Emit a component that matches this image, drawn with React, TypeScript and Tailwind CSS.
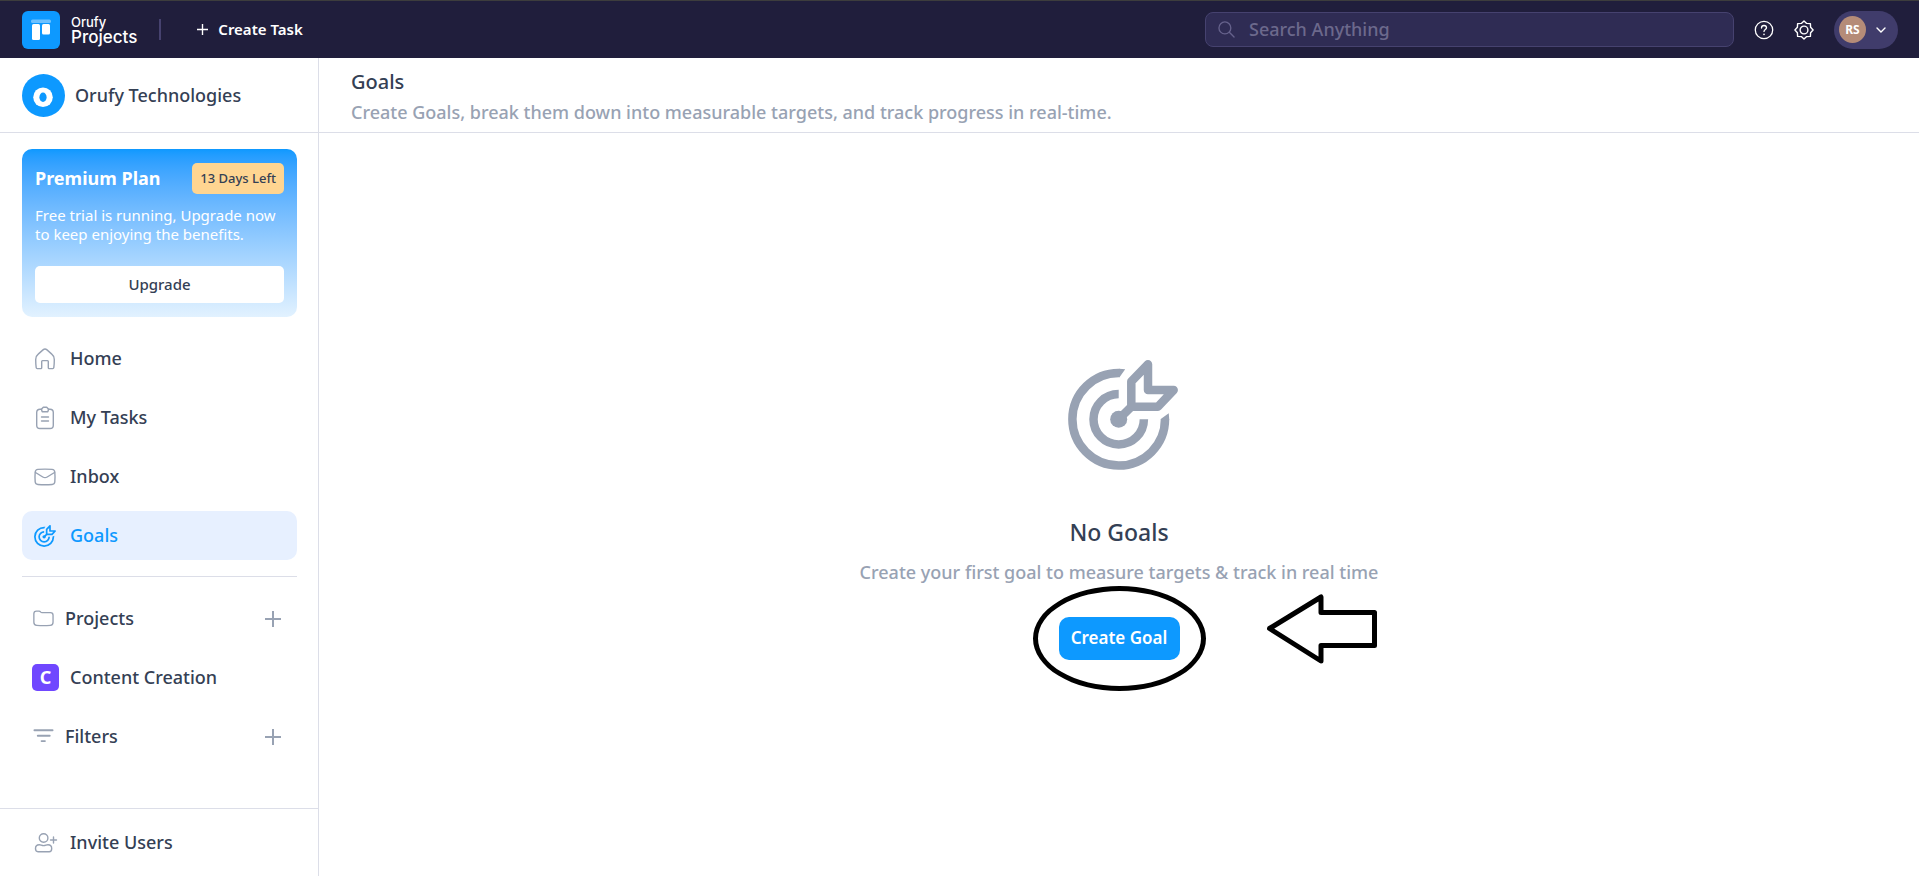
import type { ReactNode } from "react";

type IconProps = { className?: string };

function TargetIcon({ className }: IconProps) {
  return (
    <svg viewBox="0 0 110 110" fill="none" stroke="currentColor" strokeWidth="8.5" className={className} aria-hidden="true">
      <path d="M51.500 13A46.3 46.3 0 1 0 97 59" />
      <path d="M51 8.750 57.200 9.200 51.500 17.250H51zM101.250 59.500l-.5-6.200-8 5.700v.5z" fill="currentColor" stroke="none" />
      <path d="M50.7 34.1A25.2 25.2 0 1 0 75.9 59.3" />
      <circle cx="50.7" cy="59.3" r="8.5" fill="currentColor" stroke="none" />
      <path d="M50.7 59.3 63.3 46.7V21.5L80 4.3V30h25.7L90 46.7H63.3" strokeLinejoin="round" />
    </svg>
  );
}

function HomeIcon({ className }: IconProps) {
  return (
    <svg viewBox="0 0 22 22" fill="none" stroke="currentColor" strokeWidth="1.4" strokeLinejoin="round" className={className} aria-hidden="true">
      <path d="M1.700 11.500c0-2.700.7-4 2.500-5.400l4.800-4.200c1.300-1.100 2.700-1.100 4 0l4.800 4.200c1.800 1.400 2.500 2.700 2.500 5.400 0 2.800-.1 5.500-.5 8.200-.1.600-.4.900-1 .9h-3.700c-.5 0-.8-.3-.8-.8v-6.400c0-.5-.3-.8-.8-.8H8.500c-.5 0-.8.3-.8.800v6.400c0 .5-.3.800-.8.800H3.200c-.6 0-.9-.3-1-.9-.4-2.700-.5-5.400-.5-8.200z" />
    </svg>
  );
}

function TasksIcon({ className }: IconProps) {
  return (
    <svg viewBox="0 0 22 24" fill="none" stroke="currentColor" strokeWidth="1.4" strokeLinecap="round" strokeLinejoin="round" className={className} aria-hidden="true">
      <path d="M7.500 3.200H6C4 3.200 2.700 4.500 2.700 6.500v12.700c0 2 1.300 3.300 3.300 3.300h10c2 0 3.300-1.300 3.300-3.300V6.500c0-2-1.300-3.300-3.300-3.300h-1.500" />
      <path d="M9.300 1.200h3.400l1.900 2.100-.8 2.500H8.200l-.8-2.500z" />
      <path d="M7.500 11h7M7.500 15h7" />
    </svg>
  );
}

function InboxIcon({ className }: IconProps) {
  return (
    <svg viewBox="0 0 22 22" fill="none" stroke="currentColor" strokeWidth="1.4" strokeLinecap="round" strokeLinejoin="round" className={className} aria-hidden="true">
      <path d="M1.200 6c.2-1.700 1-2.500 2.700-2.600 4.700-.3 9.500-.3 14.200 0 1.700.100 2.500.900 2.700 2.600.3 3.300.3 6.700 0 10-.2 1.600-1 2.400-2.700 2.500-4.700.3-9.500.3-14.200 0-1.700-.1-2.500-.9-2.700-2.500-.3-3.300-.3-6.700 0-10z" />
      <path d="M1.500 6.500 8.800 11c1.500.9 2.900.9 4.400 0l7.300-4.500" />
    </svg>
  );
}

function FolderIcon({ className }: IconProps) {
  return (
    <svg viewBox="0 0 22 22" fill="none" stroke="currentColor" strokeWidth="1.4" strokeLinejoin="round" className={className} aria-hidden="true">
      <path d="M.9 6c0-1.700 1-2.800 2.700-2.800h2.700c.7 0 1.200.3 1.600.9.400.5.9.8 1.600.8h8.800c1.700 0 2.700 1 2.700 2.700v7.200c0 2-1 3.200-2.900 3.400-4.700.4-9.500.4-14.200 0C2 18 .9 16.800.9 14.800z" />
    </svg>
  );
}

function FilterIcon({ className }: IconProps) {
  return (
    <svg viewBox="0 0 22 22" fill="none" stroke="currentColor" strokeWidth="2" strokeLinecap="round" className={className} aria-hidden="true">
      <path d="M1.500 4.500h19M5 10.200h12.500M9 15.800h3.500" />
    </svg>
  );
}

function InviteIcon({ className }: IconProps) {
  return (
    <svg viewBox="0 0 24 22" fill="none" stroke="currentColor" strokeWidth="1.400" strokeLinecap="round" strokeLinejoin="round" className={className} aria-hidden="true">
      <circle cx="9.600" cy="6" r="4.300" />
      <path d="M1.500 16.500c0-2.200 1.500-3.800 3.700-3.800 1.700 0 2.500.9 4.400.9s2.700-.9 4.400-.9c2.200 0 3.700 1.600 3.700 3.800 0 2.100-.7 3.200-2.500 3.200H4c-1.800 0-2.500-1.100-2.500-3.200z" />
      <path d="M16.500 8h6M19.500 5v6" />
    </svg>
  );
}

function PlusIcon({ className }: IconProps) {
  return (
    <svg viewBox="0 0 16 16" fill="none" stroke="currentColor" strokeWidth="2" className={className} aria-hidden="true">
      <path d="M0 8h16M8 0v16" />
    </svg>
  );
}

function HelpIcon({ className }: IconProps) {
  return (
    <svg viewBox="0 0 20 20" fill="none" stroke="currentColor" strokeWidth="1.300" strokeLinecap="round" className={className} aria-hidden="true">
      <circle cx="10" cy="10" r="8.700" />
      <path d="M7.500 8c0-1.500 1-2.500 2.500-2.500s2.500 1 2.500 2.300c0 1.700-2.500 1.800-2.500 3.600" />
      <path d="M10 14.200v.2" strokeWidth="1.600" />
    </svg>
  );
}

function GearIcon({ className }: IconProps) {
  return (
    <svg viewBox="0 0 20 20" fill="none" stroke="currentColor" strokeWidth="1.400" strokeLinejoin="round" className={className} aria-hidden="true">
      <path d="M10 .9 12.700 3.400 16.400 3.600 16.600 7.300 19.100 10 16.600 12.700 16.400 16.400 12.700 16.600 10 19.100 7.300 16.600 3.600 16.400 3.400 12.700.9 10 3.400 7.300 3.600 3.600 7.300 3.400z" />
      <circle cx="10" cy="10" r="3.900" />
    </svg>
  );
}

function Navbar() {
  return (
    <header className="flex h-[58px] items-center justify-between border-t border-[#3d3d3d] bg-[#201e3c] pr-[21px] pl-[22px] text-white">
      <div className="flex items-center">
        {/* Logo */}
        <a href="#" className="flex items-center gap-[11px]">
          <svg viewBox="0 0 38 38" className="size-[38px]" aria-hidden="true">
            <rect width="38" height="38" rx="6" fill="#0d99ff" />
            <rect x="9" y="8.500" width="20" height="3.500" rx="1.500" fill="#6dc1ff" />
            <rect x="10" y="13" width="8" height="16" rx="1.500" fill="#fff" />
            <rect x="20" y="13" width="8" height="10.500" rx="1.500" fill="#fff" />
          </svg>
          <span className="flex flex-col font-['Inter',sans-serif] font-medium">
            <span className="text-[13px] leading-[14px]">Orufy</span>
            <span className="text-[17px] leading-[16px]">Projects</span>
          </span>
        </a>
        <span className="ml-[22px] h-[21px] w-[2px] bg-[#46426f]" />
        <button className="ml-9 flex items-center gap-2.5 text-[15px] font-semibold">
          <PlusIcon className="size-[11px]" />
          Create Task
        </button>
      </div>

      <div className="flex items-center">
        <label className="flex h-[35px] w-[529px] items-center gap-3.5 rounded-lg border border-[#46426f] bg-[#2f2c54] px-3">
          <svg viewBox="0 0 18 18" fill="none" stroke="#66628c" strokeWidth="1.400" strokeLinecap="round" className="size-[17px]" aria-hidden="true">
            <circle cx="7.300" cy="7.300" r="6.300" />
            <path d="m12 12 5 5" />
          </svg>
          <input
            type="text"
            aria-label="Search"
            placeholder="Search Anything"
            className="min-w-0 flex-1 bg-transparent text-[18px] font-medium outline-none placeholder:text-[#6c698c]"
          />
        </label>
        <button aria-label="Help" className="ml-5">
          <HelpIcon className="size-[20px]" />
        </button>
        <button aria-label="Settings" className="ml-5">
          <GearIcon className="size-[20px]" />
        </button>
        <button aria-label="Account" className="ml-5 flex h-[38px] w-[64px] items-center gap-2.5 rounded-full bg-[#403c6b] pl-[5px]">
          <span className="flex size-[27px] items-center justify-center rounded-full bg-[#b58c78] text-[12px] font-bold">RS</span>
          <svg viewBox="0 0 10 6" fill="none" stroke="currentColor" strokeWidth="1.400" strokeLinecap="round" className="w-[10px]" aria-hidden="true">
            <path d="m1 1 4 4 4-4" />
          </svg>
        </button>
      </div>
    </header>
  );
}

function NavItem({ icon, label, active }: { icon: ReactNode; label: string; active?: boolean }) {
  return (
    <a
      href="#"
      className={`flex h-[49px] items-center gap-3.5 rounded-[10px] pl-3 ${
        active ? "bg-[#e7f0ff] text-[#0d99ff]" : ""
      }`}
    >
      <span className={active ? "" : "text-[#98a2b3]"}>{icon}</span>
      {label}
    </a>
  );
}

function SectionRow({ icon, label }: { icon: ReactNode; label: string }) {
  return (
    <div className="flex h-[49px] items-center gap-[11px] pr-4 pl-[11px]">
      <span className="text-[#98a2b3]">{icon}</span>
      <span className="flex-1">{label}</span>
      <button aria-label={`Add ${label}`} className="text-[#98a2b3]">
        <PlusIcon className="size-[16px]" />
      </button>
    </div>
  );
}

function Sidebar() {
  const navLinks = [
    { label: "Home", icon: <HomeIcon className="size-[22px]" /> },
    { label: "My Tasks", icon: <TasksIcon className="h-[24px] w-[22px]" /> },
    { label: "Inbox", icon: <InboxIcon className="size-[22px]" /> },
    { label: "Goals", icon: <TargetIcon className="size-[22px]" />, active: true },
  ];

  return (
    <aside className="flex w-[319px] shrink-0 flex-col border-r border-[#dcdee8]">
      <div className="flex h-[75px] items-center gap-2.5 border-b border-[#dcdee8] pl-[22px] text-[18px] font-medium">
        <svg viewBox="0 0 44 44" className="size-[43px]" aria-hidden="true">
          <circle cx="22" cy="22" r="22" fill="#0d99ff" />
          <ellipse cx="21.500" cy="23.800" rx="10" ry="10" fill="#fff" />
          <ellipse cx="21.500" cy="23.800" rx="3.700" ry="4.800" fill="#0d99ff" />
        </svg>
        Orufy Technologies
      </div>

      <div className="flex flex-1 flex-col pt-4 pr-[21px] pl-[22px] text-[18px] font-medium">
        {/* Plan card */}
        <div className="rounded-[10px] bg-linear-to-b from-[#0d99ff] to-[#e2f2ff] px-[13px] pt-3.5 pb-3.5">
          <div className="flex items-center justify-between">
            <h2 className="text-[18px] font-bold text-white">Premium Plan</h2>
            <span className="flex h-[31px] items-center rounded-[5px] bg-[#ffd591] px-2 text-[13px] font-medium">13 Days Left</span>
          </div>
          <p className="mt-3 text-[15px] leading-[19px] font-normal whitespace-nowrap text-white">
            Free trial is running, Upgrade now
            <br />
            to keep enjoying the benefits.
          </p>
          <button className="mt-[22px] h-[37px] w-full rounded-[5px] bg-white text-[15px] font-medium">Upgrade</button>
        </div>

        <nav className="mt-[17px] flex flex-col gap-2.5">
          {navLinks.map((link) => (
            <NavItem key={link.label} {...link} />
          ))}
        </nav>

        <hr className="mt-4 border-[#dcdee8]" />

        <div className="mt-[17px] flex flex-col gap-2.5">
          <SectionRow label="Projects" icon={<FolderIcon className="size-[21px]" />} />
          <a href="#" className="flex h-[49px] items-center gap-[11px] pl-2.5">
            <span className="flex size-[27px] items-center justify-center rounded-[5px] bg-[#7047ff] font-bold text-white">C</span>
            Content Creation
          </a>
          <SectionRow label="Filters" icon={<FilterIcon className="size-[21px]" />} />
        </div>
      </div>

      <a href="#" className="flex h-[68px] items-center gap-3 border-t border-[#dcdee8] pl-[34px] text-[18px] font-medium">
        <InviteIcon className="h-[22px] w-[24px] text-[#98a2b3]" />
        Invite Users
      </a>
    </aside>
  );
}

function EmptyGoals() {
  return (
    <section className="flex flex-1 flex-col items-center justify-center pt-2.5 text-center">
      <TargetIcon className="ml-2 size-[110px] text-[#98a2b3]" />
      <h2 className="mt-[46px] text-[23px] leading-8 font-medium">No Goals</h2>
      <p className="mt-3 text-[18px] leading-6 font-medium text-[#98a2b3]">
        Create your first goal to measure targets &amp; track in real time
      </p>
      <div className="relative mt-[33px]">
        <button className="h-[43px] w-[121px] rounded-[10px] bg-[#0d99ff] text-[17px] font-semibold text-white">Create Goal</button>
        {/* Marker drawn round the button, and the arrow pointing at it */}
        <span className="pointer-events-none absolute -top-[31px] -left-[26px] h-[105px] w-[173px] rounded-[50%] border-5 border-black" />
        <svg viewBox="0 0 110 70" fill="none" stroke="#000" strokeWidth="5" strokeLinejoin="round" className="pointer-events-none absolute -top-[23px] left-[208px] w-[110px]" aria-hidden="true">
          <path d="M2.500 34.500 54 3v15.500h53.500v33H54V67z" />
        </svg>
      </div>
    </section>
  );
}

export default function App() {
  return (
    <div className="flex min-h-screen flex-col bg-white font-['Noto_Sans','Open_Sans',sans-serif] text-[#344054]">
      <Navbar />
      <div className="flex flex-1">
        <Sidebar />
        <main className="flex flex-1 flex-col">
          <div className="flex h-[75px] flex-col border-b border-[#dcdee8] pt-2.5 pl-8">
            <h1 className="text-[20px] leading-7 font-medium">Goals</h1>
            <p className="mt-1 text-[18px] leading-6 font-medium text-[#98a2b3]">
              Create Goals, break them down into measurable targets, and track progress in real-time.
            </p>
          </div>
          <EmptyGoals />
        </main>
      </div>
    </div>
  );
}
